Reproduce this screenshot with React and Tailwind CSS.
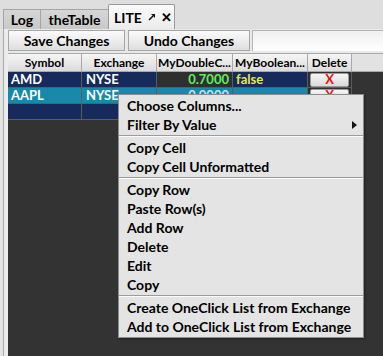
import React from "react";

const F = { fontFamily: "Lato, 'Liberation Sans', sans-serif" };

function Tab({ label, w, active, children }) {
  if (active) {
    return (
      <div
        className="h-[25px] border border-b-0 border-[#9a9a9a] bg-gradient-to-b from-[#fafafa] to-[#ececec] rounded-t-[2px] flex items-center pl-[5px] text-[14px] font-bold text-black"
        style={{ width: w }}
      >
        {label}
        {children}
      </div>
    );
  }
  return (
    <div
      className="h-[20px] border border-b-0 border-r-0 border-[#a5a5a5] bg-gradient-to-b from-[#d6d6d6] to-[#c9c9c9] flex items-center justify-center text-[14px] font-bold text-black"
      style={{ width: w }}
    >
      {label}
    </div>
  );
}

function Sep() {
  return (
    <div className="h-[4px] flex flex-col justify-center">
      <div className="h-px bg-[#9c9c9c]" />
      <div className="h-px bg-[#fbfbfb]" />
    </div>
  );
}

function Item({ children, arrow }) {
  return (
    <div className="h-[19px] flex items-center pl-[8px] pr-[6px] text-[14px] font-bold text-black leading-none">
      <span className="flex-1">{children}</span>
      {arrow && (
        <svg width="5" height="8" viewBox="0 0 5 8">
          <path d="M0 0 L5 4 L0 8 Z" fill="#111" />
        </svg>
      )}
    </div>
  );
}

const cols = [74, 75, 76, 75, 44];

function HeaderCell({ w, children }) {
  return (
    <div
      className="h-full border-r border-[#a8a8a8] flex items-center justify-center text-[12px] font-bold text-black overflow-hidden whitespace-nowrap"
      style={{ width: w }}
    >
      {children}
    </div>
  );
}

function Cell({ w, bg, children, cls = "" }) {
  return (
    <div
      className={`h-full border-r border-b border-[#5c5c5c] flex items-center text-[13px] font-bold overflow-hidden whitespace-nowrap ${cls}`}
      style={{ width: w, background: bg }}
    >
      {children}
    </div>
  );
}

function DelBtn() {
  return (
    <div className="h-full border-r border-b border-[#5c5c5c] bg-[#2f2f2f] flex items-center justify-center" style={{ width: 44 }}>
      <div className="w-[39px] h-[14px] bg-gradient-to-b from-[#f6f6f6] to-[#dadada] border border-[#9a9a9a] rounded-[2px] flex items-center justify-center text-[13px] font-bold text-[#ee1111] leading-none">
        X
      </div>
    </div>
  );
}

export default function App() {
  const navy = "#172a5c";
  const teal = "#168aa8";
  return (
    <div className="w-[383px] h-[356px] overflow-hidden bg-[#dedede] relative" style={F}>
      {/* tab bar */}
      <div className="h-[29px] flex items-end pl-[3px]">
        <Tab label="Log" w={37} />
        <Tab label="theTable" w={68} />
        <Tab label="LITE" w={67} active>
          <span className="ml-[6px] flex items-center">
            <svg width="8" height="8" viewBox="0 0 8 8">
              <path d="M1 7 L5 3" stroke="#111" strokeWidth="1.6" />
              <path d="M3 1 L7 1 L7 5 Z" fill="#111" />
            </svg>
          </span>
          <span className="ml-[5px] text-[13px] leading-none">✕</span>
        </Tab>
      </div>

      {/* content */}
      <div className="flex h-[327px]">
        <div className="w-[8px] h-full flex">
          <div className="w-[3px] bg-[#e4e4e4]" />
          <div className="w-px bg-[#a8a8a8]" />
          <div className="w-[4px] bg-[#ececec]" />
        </div>
        <div className="flex-1 flex flex-col bg-[#333333]">
          {/* buttons */}
          <div className="h-[24px] flex items-stretch bg-[#e9e9e9] pt-[1px] pb-[2px]">
            <div className="w-[117px] border border-[#a6a6a6] bg-gradient-to-b from-[#fbfbfb] to-[#dedede] flex items-center justify-center text-[14px] font-bold text-black">
              Save Changes
            </div>
            <div className="w-[3px]" />
            <div className="w-[122px] border border-[#a6a6a6] bg-gradient-to-b from-[#fbfbfb] to-[#dedede] flex items-center justify-center text-[14px] font-bold text-black">
              Undo Changes
            </div>
            <div className="w-[2px]" />
            <div className="flex-1 border-t border-l border-[#b5b5b5] bg-gradient-to-b from-[#f0f0f0] to-white" />
          </div>
          {/* header */}
          <div className="h-[19px] flex bg-gradient-to-b from-[#f5f5f5] to-[#dcdcdc] border-t border-b border-[#a8a8a8]">
            <HeaderCell w={cols[0]}>Symbol</HeaderCell>
            <HeaderCell w={cols[1]}>Exchange</HeaderCell>
            <HeaderCell w={cols[2]}>MyDoubleC...</HeaderCell>
            <HeaderCell w={cols[3]}>MyBoolean...</HeaderCell>
            <HeaderCell w={cols[4]}>Delete</HeaderCell>
            <div className="flex-1 bg-[#e2e2e2]" />
          </div>
          {/* rows */}
          <div className="h-[16px] flex">
            <Cell w={cols[0]} bg={navy} cls="text-white pl-[3px]">AMD</Cell>
            <Cell w={cols[1]} bg={navy} cls="text-white pl-[4px]">NYSE</Cell>
            <Cell w={cols[2]} bg="#2f2f2f" cls="text-[#5ef05e] justify-end pr-[3px]">0.7000</Cell>
            <Cell w={cols[3]} bg={navy} cls="text-[#e8e84a] pl-[3px]">false</Cell>
            <DelBtn />
          </div>
          <div className="h-[16px] flex">
            <Cell w={cols[0]} bg={teal} cls="text-white pl-[3px]">AAPL</Cell>
            <Cell w={cols[1]} bg={teal} cls="text-white pl-[4px]">NYSE</Cell>
            <Cell w={cols[2]} bg={teal} cls="text-[#bfe6ee] justify-end pr-[3px]">0.0000</Cell>
            <Cell w={cols[3]} bg={teal} cls="text-white pl-[3px]"></Cell>
            <DelBtn />
          </div>
          <div className="h-[16px] flex">
            <Cell w={cols[0]} bg={navy} />
            <Cell w={cols[1]} bg={navy} />
            <Cell w={cols[2]} bg={navy} />
            <Cell w={cols[3]} bg={navy} />
            <Cell w={cols[4]} bg={navy} />
          </div>
          <div className="flex-1" />
        </div>
      </div>

      {/* context menu */}
      <div className="absolute left-[118px] top-[94px] w-[246px] bg-[#e4e4e4] border border-[#8e8e8e] py-[1px] shadow-[1px_1px_2px_rgba(0,0,0,0.35)]">
        <Item>Choose Columns...</Item>
        <Item arrow>Filter By Value</Item>
        <Sep />
        <Item>Copy Cell</Item>
        <Item>Copy Cell Unformatted</Item>
        <Sep />
        <Item>Copy Row</Item>
        <Item>Paste Row(s)</Item>
        <Item>Add Row</Item>
        <Item>Delete</Item>
        <Item>Edit</Item>
        <Item>Copy</Item>
        <Sep />
        <Item>Create OneClick List from Exchange</Item>
        <Item>Add to OneClick List from Exchange</Item>
      </div>
    </div>
  );
}
